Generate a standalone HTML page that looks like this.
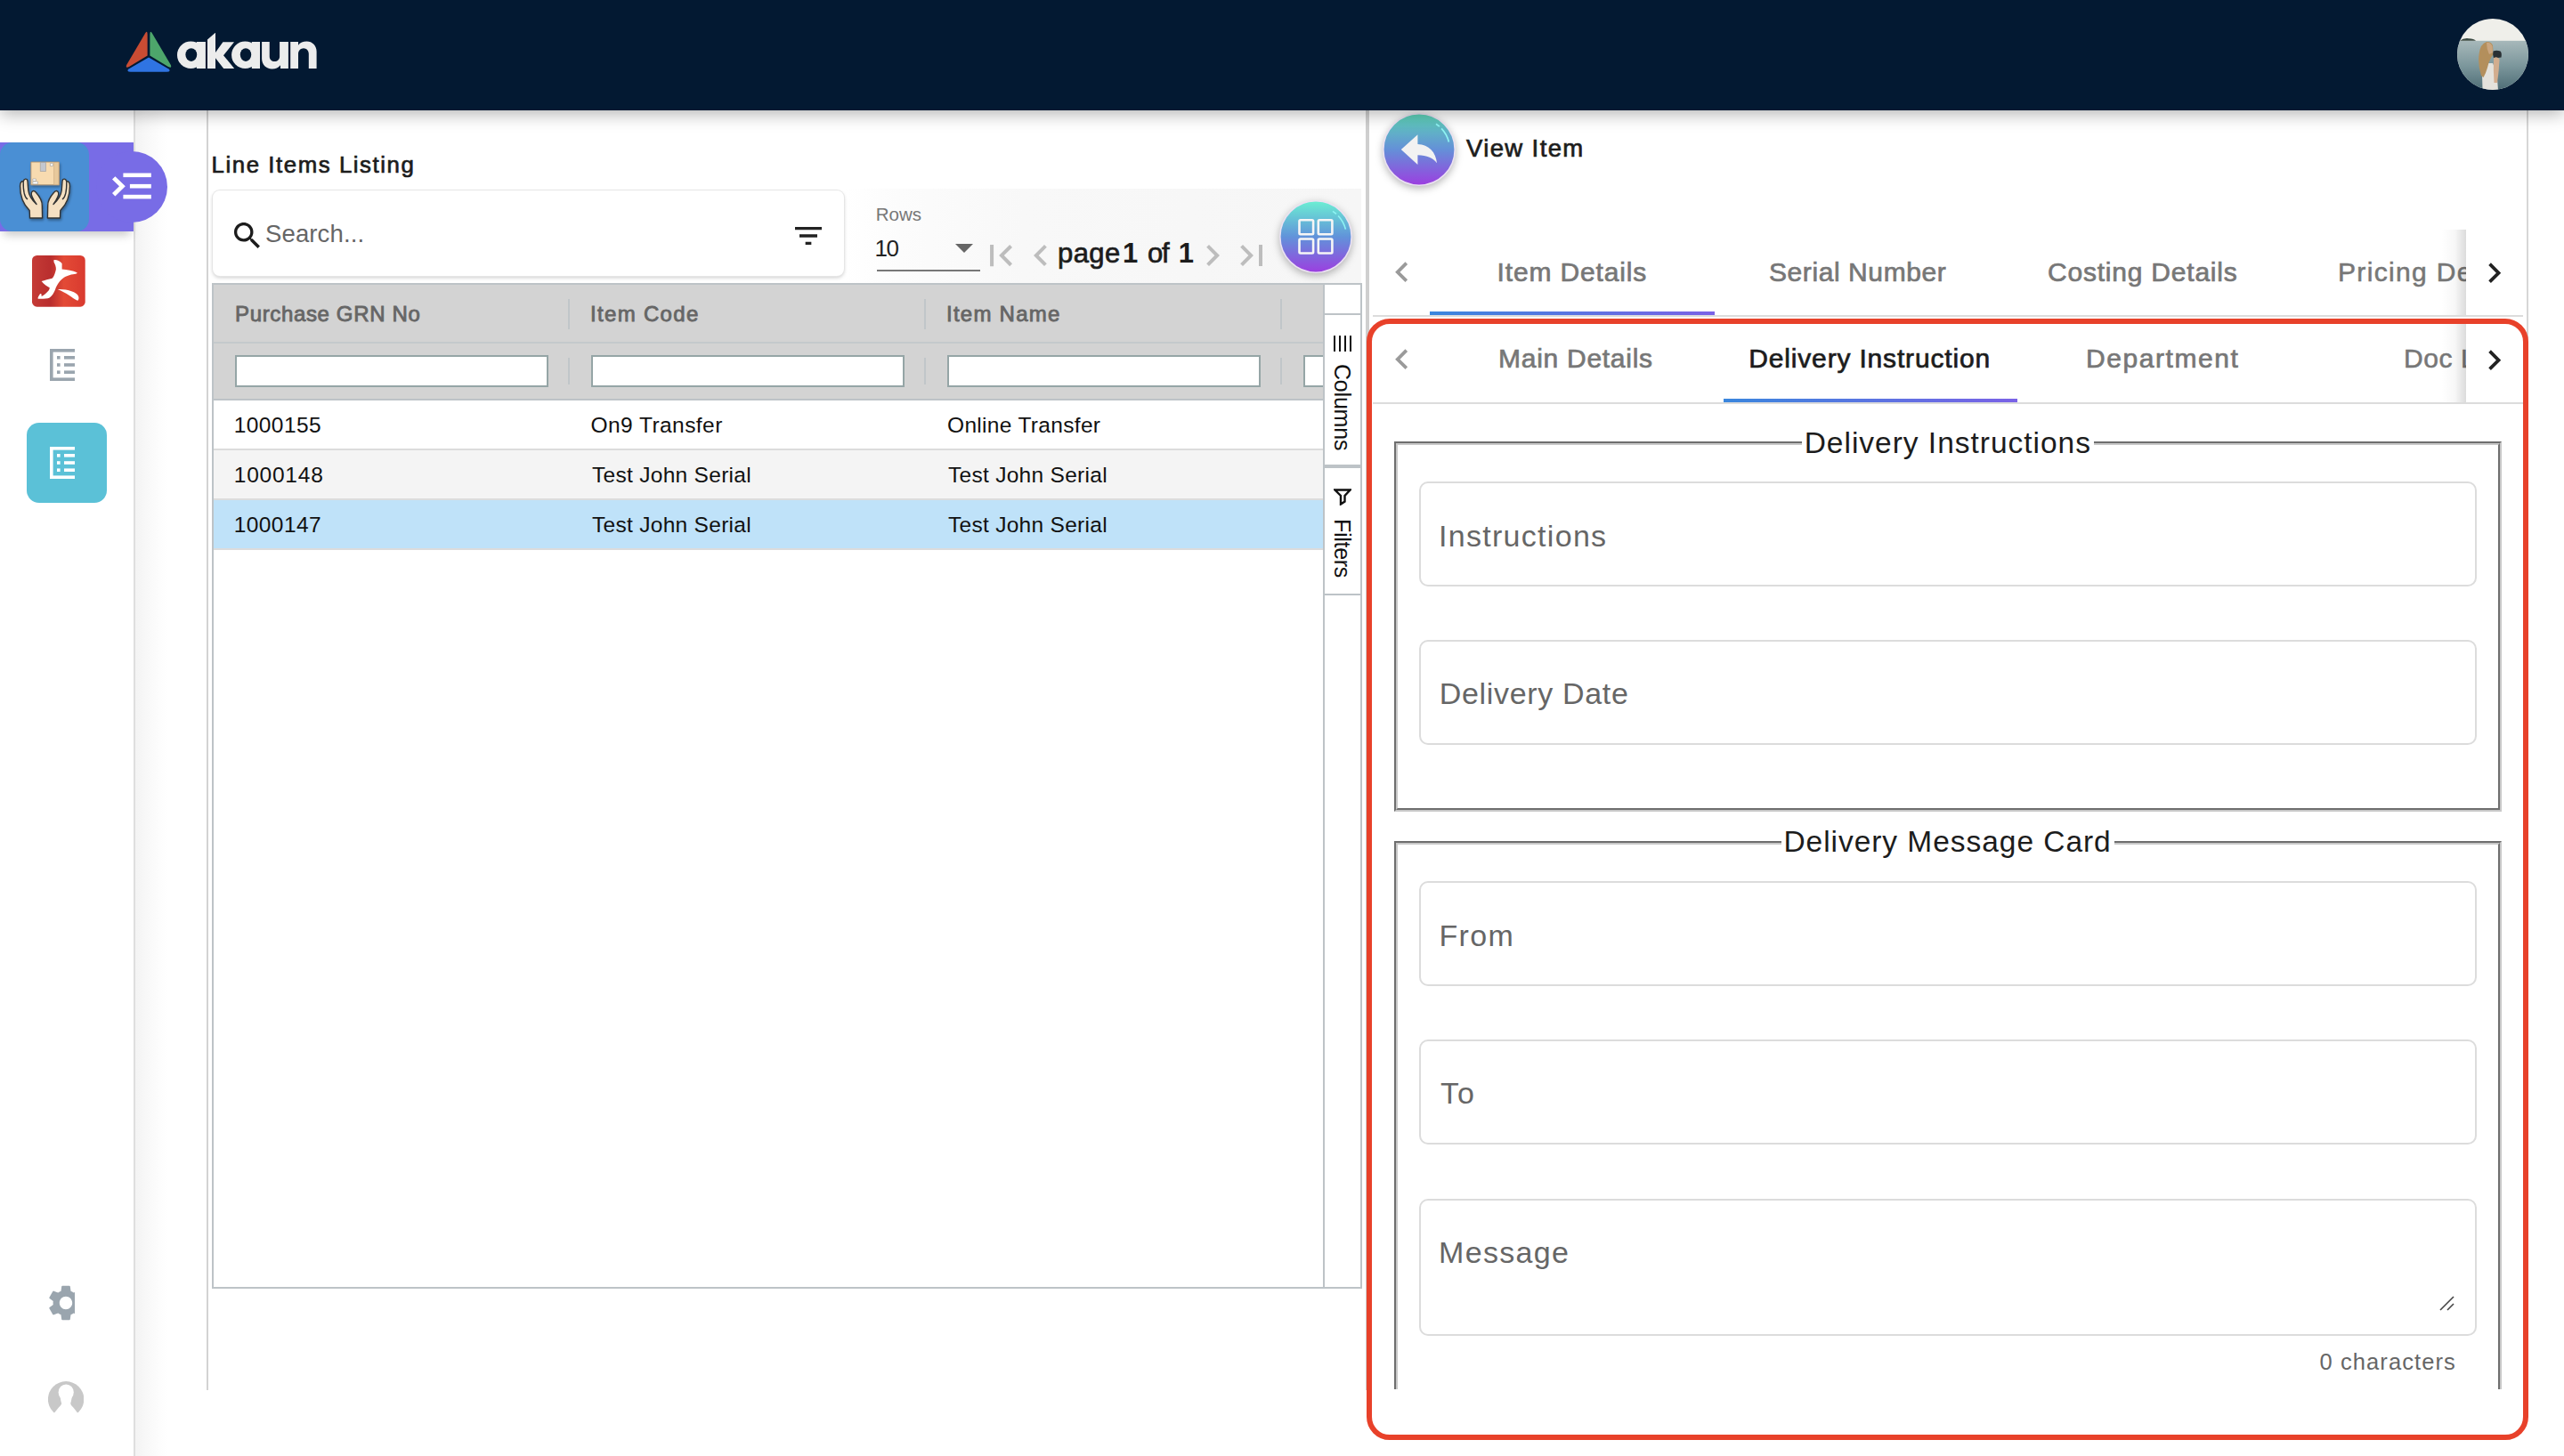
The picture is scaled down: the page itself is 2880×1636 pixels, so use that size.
<!DOCTYPE html>
<html><head><meta charset="utf-8"><style>
html,body{margin:0;padding:0;width:2880px;height:1636px;overflow:hidden;background:#fff;position:relative}
body{font-family:"Liberation Sans", sans-serif}
.t{position:absolute;white-space:nowrap;font-family:"Liberation Sans", sans-serif}
</style></head><body>
<div style="position:absolute;left:0px;top:0px;width:2880px;height:124px;background:#031932;z-index:5;box-shadow:0 4px 18px rgba(0,0,0,0.30)"></div>
<svg style="position:absolute;left:0px;top:0px;z-index:6" width="400" height="124" viewBox="0 0 400 124">
<path d="M163.2,37.2 Q165.6,33.8 165.6,38.5 V62.6 L145,75 Q140.5,77.2 142.3,72.8 Z" fill="#c94c33"/>
<path d="M168.4,38.5 Q168.4,33.8 170.8,37.2 L191.7,72.8 Q193.5,77.2 189,75 L168.4,62.6 Z" fill="#4da66b"/>
<path d="M167,64.6 L189.5,77.6 Q192.5,80.6 187.5,80.8 H146.5 Q141.5,80.6 144.5,77.6 Z" fill="#2f74e2"/>
<g fill="#ececec">
<circle cx="214.3" cy="61.8" r="15.3"/>
<rect x="220.9" y="47" width="10" height="30"/>
<path d="M233,44.4 L241.6,37 H242 V58.9 L250.4,47.2 H263 L251,62.2 L263.2,77 H251.2 L242,65.2 V77 H233 Z"/>
<circle cx="275.4" cy="61.8" r="15.3"/>
<rect x="282.8" y="47" width="9.2" height="30"/>
<path d="M323.9,47 V77 H315 V73.2 C313,76 309.5,77.5 305.5,77.5 C299,77.5 294.1,72.5 294.1,66 V47 H302.75 V63.5 C302.75,67 305.2,69 308.4,69 C311.6,69 314.1,67 314.1,63.5 V47 Z"/>
<path d="M326.2,77 V47 H335 V50.8 C337,48 340.5,46.6 344.5,46.6 C351,46.6 355.6,51.5 355.6,58 V77 H346.8 V60.5 C346.8,57 344.3,54.2 341,54.2 C337.7,54.2 335,57 335,60.5 V77 Z"/>
</g>
<ellipse cx="214.8" cy="61.6" rx="6.4" ry="7.4" fill="#031932"/>
<ellipse cx="276" cy="61.6" rx="6.2" ry="7.4" fill="#031932"/>
</svg>
<svg style="position:absolute;left:2760px;top:21px;z-index:6" width="80" height="80" viewBox="0 0 80 80">
<defs><clipPath id="avc"><circle cx="40" cy="40" r="40"/></clipPath>
<linearGradient id="sea" x1="0" y1="0" x2="0" y2="1"><stop offset="0" stop-color="#a7b8ba"/><stop offset="0.5" stop-color="#7c979c"/><stop offset="1" stop-color="#4d6c75"/></linearGradient></defs>
<g clip-path="url(#avc)">
<rect x="0" y="0" width="80" height="80" fill="#efefea"/>
<rect x="0" y="24.8" width="80" height="56" fill="url(#sea)"/>
<path d="M3,24.8 Q7,21.5 13,22.2 Q19,22.3 21,24.8 Z" fill="#3b4a42"/>
<path d="M28.5,80 L28,62 Q26,55 28.5,50 L40,50 Q45,60 46,80 Z" fill="#e4e2dc"/>
<path d="M27,64 Q23,52 24.5,40 Q26,28 33,26 Q38,25.5 40,30 L40.5,40 Q36,46 34,55 Q32,62 29.5,66 Z" fill="#b38f5c"/>
<path d="M33,27 Q37,26 39.5,31 L40,38 L36,40 Q33,34 33,27 Z" fill="#caa680"/>
<path d="M40.5,36.5 Q44,34.8 48.5,36.5 Q50.5,38.5 49.5,43.5 L41,44.5 Q39.5,40 40.5,36.5 Z" fill="#2a3034"/>
<path d="M41,44 Q46,42 47.5,46 Q47,58 45,72 L41.5,72 Q40.5,58 41,44 Z" fill="#d2ad8e"/>
</g></svg>
<div style="position:absolute;left:150px;top:124px;width:2px;height:1512px;background:#dedede"></div>
<div style="position:absolute;left:152px;top:124px;width:81px;height:1512px;background:linear-gradient(to right,#f3f3f3 0px,#f8f8f8 12px,#fdfdfd 28px,#fff 36px)"></div>
<div style="position:absolute;left:232px;top:124px;width:2px;height:1438px;background:#d3d3d3"></div>
<div style="position:absolute;left:0px;top:160px;width:150px;height:100px;background:#786ce6;box-shadow:0 8px 10px -4px rgba(0,0,0,0.22)"></div>
<div style="position:absolute;left:108px;top:170px;width:80px;height:80px;background:#786ce6;border-radius:50%"></div>
<div style="position:absolute;left:0px;top:160px;width:100px;height:100px;background:#4a8fd4;border-radius:14px"></div>
<svg style="position:absolute;left:0px;top:0px;" width="200" height="270" viewBox="0 0 200 270">
<defs><filter id="hs" x="-20%" y="-20%" width="140%" height="140%"><feGaussianBlur in="SourceAlpha" stdDeviation="1.6"/><feOffset dx="1.2" dy="2" result="ob"/><feComponentTransfer><feFuncA type="linear" slope="0.35"/></feComponentTransfer><feMerge><feMergeNode/><feMergeNode in="SourceGraphic"/></feMerge></filter></defs>
<g filter="url(#hs)">
<g stroke="#333" stroke-width="1.4" stroke-linejoin="round">
<rect x="34.8" y="182" width="31.6" height="25.8" fill="#f8dbb0" stroke="#a88c6c" stroke-width="0.9"/>
<rect x="60.6" y="182.5" width="5.4" height="25" fill="#e8c99c" stroke="#c9a87f" stroke-width="0.6"/>
<rect x="45.3" y="182.5" width="6.2" height="10" fill="#c3c7cf" stroke="#9a9a9a" stroke-width="0.6"/>
<rect x="56.4" y="183.6" width="3" height="3" fill="#fff" stroke="#9a9a9a" stroke-width="0.6"/>
<rect x="36.8" y="201" width="3.6" height="2.4" fill="#fff" stroke="#9a9a9a" stroke-width="0.6"/>
<rect x="36.8" y="204" width="5.6" height="2.8" fill="#fff" stroke="#9a9a9a" stroke-width="0.6"/>
<path d="M33.5,245 L33.2,236.5 C26.5,230 22.5,221 22.6,209 C22.7,204.5 24.5,203 26.2,204.2 C26.8,200.6 30.5,199.8 31,203.6 L31.8,214 C32.5,220 36,225 41,229.5 C37.5,224.5 34.6,219.5 35.3,216.6 C36.2,213.8 38.5,214 40.2,216 C43.8,220 47.5,225 47.3,231 L47.6,245 Z" fill="#f5e0c2"/>
<path d="M67.5,245 L67.8,236.5 C74.5,230 78.5,221 78.4,209 C78.3,204.5 76.5,203 74.8,204.2 C74.2,200.6 70.5,199.8 70,203.6 L69.2,214 C68.5,220 65,225 60,229.5 C63.5,224.5 66.4,219.5 65.7,216.6 C64.8,213.8 62.5,214 60.8,216 C57.2,220 53.5,225 53.7,231 L53.4,245 Z" fill="#f5e0c2"/>
<path d="M26.2,204.2 C26,215 28,222 31,224" fill="none"/>
<path d="M74.8,204.2 C75,215 73,222 70,224" fill="none"/>
</g></g>
<g fill="#fff">
<path d="M126,201.6 L129.4,198.2 L140.8,209.2 L129.4,220.4 L126,217 L134,209.2 Z"/>
<rect x="138.4" y="194.5" width="31.4" height="4.6"/>
<rect x="145.9" y="206.9" width="23.9" height="4.6"/>
<rect x="138.4" y="218.8" width="31.4" height="4.6"/>
</g></svg>
<svg style="position:absolute;left:36.25px;top:287px;" width="60" height="58" viewBox="0 0 60 58">
<defs><linearGradient id="rg" x1="0" x2="1"><stop offset="0" stop-color="#c53b36"/><stop offset="0.35" stop-color="#b92e2e"/><stop offset="0.6" stop-color="#e34a36"/><stop offset="1" stop-color="#d93a2f"/></linearGradient></defs>
<rect x="0" y="0" width="59.7" height="57.7" rx="5.5" fill="url(#rg)"/>
<path d="M24.5,5 C27,4.5 31,5.5 33.6,8.9 L33.6,15.6 C39,16.2 46,17 50.5,19.2 C51,20 50,20.8 44,21.4 C38,23 33,26 30.8,29.6 C28.5,32.5 27,35.5 25.9,38.7 C24.5,42 22.5,45.5 19.7,47.4 C17,48.6 12,49 7.2,48.8 C6,48.5 6.5,47 9.1,43 L10.6,43.5 L10.6,45.9 C13,45 16,42.5 18.8,39.2 C19.6,38 19.8,37 19.7,36.3 C17,35 13.5,32.5 10.6,29.1 C14,27.6 19,27 22.6,25.7 C24.5,24.5 26,20 26.9,15.6 C27,13 26,10 24.5,7.5 Z" fill="#fff"/>
<path d="M28.8,38 C33,37.6 40,38.5 44.2,40.2 C48,41.5 51.5,43 52.4,46.9 C52.7,48.5 52,50.7 51,50.7 C48,49.5 44,46.5 41.8,45 C38,42.5 33,39.5 28.8,38 Z" fill="#fff"/></svg>
<svg style="position:absolute;left:56px;top:392px;" width="28" height="36" viewBox="0 0 28 36"><g fill="#9aa5ae">
<rect x="0" y="0" width="28" height="3.6"/><rect x="0" y="32.4" width="28" height="3.6"/><rect x="0" y="0" width="3.6" height="36"/>
<rect x="8" y="8" width="3.6" height="3.6"/><rect x="16" y="8" width="12" height="3.6"/>
<rect x="8" y="16.2" width="3.6" height="3.6"/><rect x="16" y="16.2" width="12" height="3.6"/>
<rect x="8" y="24.4" width="3.6" height="3.6"/><rect x="16" y="24.4" width="12" height="3.6"/></g></svg>
<div style="position:absolute;left:30px;top:475px;width:90px;height:90px;background:#5bc1d7;border-radius:14px"></div>
<svg style="position:absolute;left:56px;top:502px;" width="28" height="36" viewBox="0 0 28 36"><g fill="#fff">
<rect x="0" y="0" width="28" height="3.6"/><rect x="0" y="32.4" width="28" height="3.6"/><rect x="0" y="0" width="3.6" height="36"/>
<rect x="8" y="8" width="3.6" height="3.6"/><rect x="16" y="8" width="12" height="3.6"/>
<rect x="8" y="16.2" width="3.6" height="3.6"/><rect x="16" y="16.2" width="12" height="3.6"/>
<rect x="8" y="24.4" width="3.6" height="3.6"/><rect x="16" y="24.4" width="12" height="3.6"/></g></svg>
<div style="position:absolute;left:50px;top:1440px;width:34px;height:48px;overflow:hidden"><svg style="position:absolute;left:0px;top:0px" width="48" height="48" viewBox="0 0 24 24"><path d="M19.14 12.94c.04-.3.06-.61.06-.94 0-.32-.02-.64-.07-.94l2.03-1.58c.18-.14.23-.41.12-.61l-1.92-3.32c-.12-.22-.37-.29-.59-.22l-2.39.96c-.5-.38-1.03-.7-1.62-.94l-.36-2.54c-.04-.24-.24-.41-.48-.41h-3.84c-.24 0-.43.17-.47.41l-.36 2.54c-.59.24-1.13.57-1.62.94l-2.39-.96c-.22-.08-.47 0-.59.22L2.74 8.87c-.12.21-.08.47.12.61l2.03 1.58c-.05.3-.09.63-.09.94s.02.64.07.94l-2.03 1.58c-.18.14-.23.41-.12.61l1.92 3.32c.12.22.37.29.59.22l2.39-.96c.5.38 1.03.7 1.62.94l.36 2.54c.05.24.24.41.48.41h3.84c.24 0 .44-.17.47-.41l.36-2.54c.59-.24 1.13-.56 1.62-.94l2.39.96c.22.08.47 0 .59-.22l1.92-3.32c.12-.22.07-.47-.12-.61l-2.01-1.58zM12 15.6c-1.98 0-3.6-1.62-3.6-3.6s1.62-3.6 3.6-3.6 3.6 1.62 3.6 3.6-1.62 3.6-3.6 3.6z" fill="#9aa5ae"/></svg></div>
<svg style="position:absolute;left:54px;top:1552px;" width="40" height="40" viewBox="0 0 40 40"><defs><clipPath id="uc"><rect x="0" y="0" width="40" height="35.4"/></clipPath></defs>
<g clip-path="url(#uc)"><circle cx="20.1" cy="20.3" r="20.2" fill="#c8c8c8"/></g>
<ellipse cx="20.2" cy="12.6" rx="8.6" ry="9.2" fill="#fff"/>
<path d="M13.6,17 C14,21 14.8,23.5 15.2,25 C14.5,27 13,28.5 11.5,30 L5,38 H35 L28.8,30 C27.3,28.5 25.8,27 25.2,25 C25.6,23.5 26.4,21 26.8,17 Z" fill="#fff"/></svg>
<div class="t" style="left:237.6px;top:172.67px;font-size:25.8px;line-height:25.8px;color:#1c1c1c;font-weight:400;letter-spacing:1.559px;;-webkit-text-stroke:0.7px #1c1c1c">Line Items Listing</div>
<div style="position:absolute;left:949px;top:212px;width:580px;height:106px;background:linear-gradient(to right,#fff 0px,#fcfcfc 60px,#f8f8f8 200px,#f6f6f6 100%)"></div>
<div style="position:absolute;left:239px;top:214px;width:709px;height:96px;background:#fff;border-radius:8px;box-shadow:0 0 0 1px #e6e6e6,0 2px 4px rgba(0,0,0,0.2)"></div>
<svg style="position:absolute;left:258px;top:245px;" width="39.77" height="39.77" viewBox="0 0 24 24"><path d="M15.5 14h-.79l-.28-.27C15.41 12.59 16 11.11 16 9.5 16 5.91 13.09 3 9.5 3S3 5.91 3 9.5 5.91 16 9.5 16c1.61 0 3.09-.59 4.23-1.57l.27.28v.79l5 4.99L20.49 19l-4.99-5zm-6 0C7.01 14 5 11.99 5 9.5S7.01 5 9.5 5 14 7.01 14 9.5 11.99 14 9.5 14z" fill="#1c1c1c"/></svg>
<div class="t" style="left:298.0px;top:249.02px;font-size:27.5px;line-height:27.5px;color:#666;font-weight:400;letter-spacing:0.125px;">Search...</div>
<svg style="position:absolute;left:888px;top:245px;" width="40.01" height="40.01" viewBox="0 0 24 24"><path d="M10 18h4v-2h-4v2zM3 6v2h18V6H3zm3 7h12v-2H6v2z" fill="#222"/></svg>
<div class="t" style="left:983.7px;top:231.38px;font-size:20.5px;line-height:20.5px;color:#777;font-weight:400;letter-spacing:-0.003px;">Rows</div>
<div class="t" style="left:982.5px;top:265.90px;font-size:26px;line-height:26px;color:#222;font-weight:400;letter-spacing:-1.5px;">10</div>
<div style="position:absolute;left:985px;top:303px;width:116px;height:2px;background:#777"></div>
<svg style="position:absolute;left:1073px;top:274px;" width="20" height="10" viewBox="0 0 20 10"><path d="M0,0 H20 L10,10 Z" fill="#666"/></svg>
<svg style="position:absolute;left:1100px;top:263px;" width="48.24" height="48.24" viewBox="0 0 24 24"><path d="M18.41 16.59L13.82 12l4.59-4.59L17 6l-6 6 6 6zM6 6h2v12H6z" fill="#bdbdbd"/></svg>
<svg style="position:absolute;left:1144.5px;top:263px;" width="48.0" height="48.0" viewBox="0 0 24 24"><path d="M15.41 7.41L14 6l-6 6 6 6 1.41-1.41L10.83 12z" fill="#bdbdbd"/></svg>
<div class="t" style="left:1188.0px;top:269.15px;font-size:31px;line-height:31px;color:#1c1c1c;font-weight:400;letter-spacing:0.4px;;-webkit-text-stroke:0.7px #1c1c1c">page</div>
<div class="t" style="left:1261.0px;top:269.15px;font-size:31px;line-height:31px;color:#1c1c1c;font-weight:700;letter-spacing:0.0px;">1</div>
<div class="t" style="left:1289.0px;top:269.15px;font-size:31px;line-height:31px;color:#1c1c1c;font-weight:400;letter-spacing:-1.3px;;-webkit-text-stroke:0.7px #1c1c1c">of</div>
<div class="t" style="left:1323.75px;top:269.15px;font-size:31px;line-height:31px;color:#1c1c1c;font-weight:700;letter-spacing:0.0px;">1</div>
<svg style="position:absolute;left:1337.8px;top:263px;" width="48.0" height="48.0" viewBox="0 0 24 24"><path d="M10 6L8.59 7.41 13.17 12l-4.58 4.59L10 18l6-6z" fill="#bdbdbd"/></svg>
<svg style="position:absolute;left:1381.8px;top:263px;" width="48.0" height="48.0" viewBox="0 0 24 24"><path d="M5.59 7.41L10.18 12l-4.59 4.59L7 18l6-6-6-6zM16 6h2v12h-2z" fill="#bdbdbd"/></svg>
<svg style="position:absolute;left:1437px;top:224px;filter:drop-shadow(0 3px 4px rgba(0,0,0,0.28))" width="82" height="86" viewBox="0 0 82 86"><defs><linearGradient id="gg" x1="0" y1="0" x2="0" y2="1"><stop offset="0" stop-color="#6cefd3"/><stop offset="0.5" stop-color="#6193da"/><stop offset="1" stop-color="#9c3ee0"/></linearGradient></defs>
<circle cx="41" cy="42" r="40.2" fill="url(#gg)" stroke="#ebe2f2" stroke-width="1.6"/>
<path d="M 60 13.4 A 34 34 0 0 1 74.4 33.6" fill="none" stroke="#8ff3f3" stroke-width="1.7" stroke-dasharray="5 3 40"/>
<g fill="none" stroke="#f6f6f6" stroke-width="2.6"><rect x="22.5" y="23.3" width="15.6" height="15.9" rx="1.2"/><rect x="43.8" y="23.3" width="15.6" height="15.9" rx="1.2"/><rect x="22.5" y="44.5" width="15.6" height="16" rx="1.2"/><rect x="43.8" y="44.5" width="15.6" height="16" rx="1.2"/></g></svg>
<div style="position:absolute;left:238px;top:318px;width:1292px;height:1130px;box-sizing:border-box;border:2px solid #bdc3c7;background:#fff"></div>
<div style="position:absolute;left:240px;top:320px;width:1247px;height:129px;background:#d3d3d3"></div>
<div style="position:absolute;left:240px;top:384px;width:1247px;height:2px;background:#c4c9cc"></div>
<div style="position:absolute;left:240px;top:448px;width:1247px;height:2px;background:#bdc3c7"></div>
<div style="position:absolute;left:240px;top:450px;width:1247px;height:54px;background:#fff"></div>
<div style="position:absolute;left:240px;top:504px;width:1247px;height:2px;background:#dcdcdc"></div>
<div class="t" style="left:262.8px;top:466.18px;font-size:24.5px;line-height:24.5px;color:#111;font-weight:400;letter-spacing:0.397px;">1000155</div>
<div class="t" style="left:663.5px;top:466.18px;font-size:24.5px;line-height:24.5px;color:#111;font-weight:400;letter-spacing:0.44px;">On9 Transfer</div>
<div class="t" style="left:1064.0px;top:466.18px;font-size:24.5px;line-height:24.5px;color:#111;font-weight:400;letter-spacing:0.324px;">Online Transfer</div>
<div style="position:absolute;left:240px;top:506px;width:1247px;height:54px;background:#f4f4f4"></div>
<div style="position:absolute;left:240px;top:560px;width:1247px;height:2px;background:#dcdcdc"></div>
<div class="t" style="left:262.8px;top:522.17px;font-size:24.5px;line-height:24.5px;color:#111;font-weight:400;letter-spacing:0.767px;">1000148</div>
<div class="t" style="left:665.0px;top:522.17px;font-size:24.5px;line-height:24.5px;color:#111;font-weight:400;letter-spacing:0.293px;">Test John Serial</div>
<div class="t" style="left:1065.0px;top:522.17px;font-size:24.5px;line-height:24.5px;color:#111;font-weight:400;letter-spacing:0.287px;">Test John Serial</div>
<div style="position:absolute;left:240px;top:562px;width:1247px;height:54px;background:#bfe2f9"></div>
<div style="position:absolute;left:240px;top:616px;width:1247px;height:2px;background:#dcdcdc"></div>
<div class="t" style="left:262.8px;top:578.17px;font-size:24.5px;line-height:24.5px;color:#111;font-weight:400;letter-spacing:0.4px;">1000147</div>
<div class="t" style="left:665.0px;top:578.17px;font-size:24.5px;line-height:24.5px;color:#111;font-weight:400;letter-spacing:0.293px;">Test John Serial</div>
<div class="t" style="left:1065.0px;top:578.17px;font-size:24.5px;line-height:24.5px;color:#111;font-weight:400;letter-spacing:0.287px;">Test John Serial</div>
<div class="t" style="left:264.0px;top:340.60px;font-size:24px;line-height:24px;color:#666;font-weight:400;letter-spacing:0.644px;;-webkit-text-stroke:0.85px #666">Purchase GRN No</div>
<div class="t" style="left:663.0px;top:340.60px;font-size:24px;line-height:24px;color:#666;font-weight:400;letter-spacing:1.32px;;-webkit-text-stroke:0.85px #666">Item Code</div>
<div class="t" style="left:1063.0px;top:340.60px;font-size:24px;line-height:24px;color:#666;font-weight:400;letter-spacing:1.25px;;-webkit-text-stroke:0.85px #666">Item Name</div>
<div style="position:absolute;left:638px;top:336px;width:2px;height:34px;background:#c0c6c9"></div>
<div style="position:absolute;left:638px;top:402px;width:2px;height:30px;background:#c0c6c9"></div>
<div style="position:absolute;left:1038px;top:336px;width:2px;height:34px;background:#c0c6c9"></div>
<div style="position:absolute;left:1038px;top:402px;width:2px;height:30px;background:#c0c6c9"></div>
<div style="position:absolute;left:1438px;top:336px;width:2px;height:34px;background:#c0c6c9"></div>
<div style="position:absolute;left:1438px;top:402px;width:2px;height:30px;background:#c0c6c9"></div>
<div style="position:absolute;left:264px;top:399px;width:352px;height:36px;box-sizing:border-box;border:2px solid #95a5a6;background:#fff"></div>
<div style="position:absolute;left:664px;top:399px;width:352px;height:36px;box-sizing:border-box;border:2px solid #95a5a6;background:#fff"></div>
<div style="position:absolute;left:1064px;top:399px;width:352px;height:36px;box-sizing:border-box;border:2px solid #95a5a6;background:#fff"></div>
<div style="position:absolute;left:1464px;top:399px;width:23px;height:36px;box-sizing:border-box;border:2px solid #95a5a6;border-right:none;background:#fff"></div>
<div style="position:absolute;left:1487px;top:320px;width:41px;height:1126px;background:#fff"></div>
<div style="position:absolute;left:1486px;top:320px;width:2px;height:1126px;background:#bdc3c7"></div>
<div style="position:absolute;left:1488px;top:352px;width:40px;height:2px;background:#bdc3c7"></div>
<div style="position:absolute;left:1488px;top:522px;width:40px;height:4px;background:#bdc3c7"></div>
<div style="position:absolute;left:1488px;top:667px;width:40px;height:2px;background:#bdc3c7"></div>
<svg style="position:absolute;left:1498px;top:377px;" width="20" height="18" viewBox="0 0 20 18"><g fill="#111"><rect x="0" y="0" width="2" height="18" rx="0.5"/><rect x="6" y="0" width="2" height="18" rx="0.5"/><rect x="12" y="0" width="2" height="18" rx="0.5"/><rect x="18" y="0" width="2" height="18" rx="0.5"/></g></svg>
<div class="t" style="left:1495px;top:409px;font-size:25px;line-height:25px;color:#111;writing-mode:vertical-rl;letter-spacing:-0.2px">Columns</div>
<svg style="position:absolute;left:1498px;top:549px;" width="20" height="19" viewBox="0 0 20 19"><path d="M1.5,1.5 H18.5 L12.5,8 V14.5 L8,17.5 V8 Z" fill="none" stroke="#111" stroke-width="2.4" stroke-linejoin="miter"/></svg>
<div class="t" style="left:1495px;top:583px;font-size:25px;line-height:25px;color:#111;writing-mode:vertical-rl;letter-spacing:-0.3px">Filters</div>
<div style="position:absolute;left:1534px;top:124px;width:4px;height:1438px;background:#cfcfcf"></div>
<div style="position:absolute;left:2838px;top:124px;width:2px;height:1438px;background:#d6d6d6"></div>
<svg style="position:absolute;left:1553px;top:127px;filter:drop-shadow(0 3px 4px rgba(0,0,0,0.28))" width="82" height="82" viewBox="0 0 82 82"><defs><linearGradient id="bg2" x1="0" y1="0" x2="0" y2="1"><stop offset="0" stop-color="#5dd3b5"/><stop offset="0.5" stop-color="#6490d8"/><stop offset="1" stop-color="#9c3ee0"/></linearGradient></defs>
<circle cx="41" cy="41" r="40.2" fill="url(#bg2)" stroke="#ebe2f2" stroke-width="1.6"/>
<path d="M 60 12.2 A 34 34 0 0 1 74.4 32.5" fill="none" stroke="#8ff3f3" stroke-width="1.7" stroke-dasharray="5 3 40"/>
<path d="M39.4,34.9 V24.2 L20.8,41 L39.4,57.9 V47.3 C50,47.3 57,51 61,56.2 C60,44 52,35.5 39.4,34.9 Z" fill="#f2f2f2"/></svg>
<div class="t" style="left:1647.0px;top:152.62px;font-size:27.5px;line-height:27.5px;color:#1c1c1c;font-weight:400;letter-spacing:1.375px;;-webkit-text-stroke:0.7px #1c1c1c">View Item</div>
<svg style="position:absolute;left:1551.9px;top:283.2px;" width="45.36" height="45.36" viewBox="0 0 24 24"><path d="M15.41 7.41L14 6l-6 6 6 6 1.41-1.41L10.83 12z" fill="#9a9a9a"/></svg>
<div class="t" style="left:1681.5px;top:290.50px;font-size:30px;line-height:30px;color:#777;font-weight:400;letter-spacing:0.863px;;-webkit-text-stroke:0.7px #777">Item Details</div>
<div class="t" style="left:1987.0px;top:290.50px;font-size:30px;line-height:30px;color:#777;font-weight:400;letter-spacing:0.583px;;-webkit-text-stroke:0.7px #777">Serial Number</div>
<div class="t" style="left:2300.0px;top:290.50px;font-size:30px;line-height:30px;color:#777;font-weight:400;letter-spacing:0.787px;;-webkit-text-stroke:0.7px #777">Costing Details</div>
<div style="position:absolute;left:2627px;top:250px;width:143px;height:100px;overflow:hidden"><div class="t" style="left:-1px;top:40.5px;font-size:30px;line-height:30px;color:#777;font-weight:400;-webkit-text-stroke:0.55px #777;letter-spacing:1.35px">Pricing Details</div></div>
<div style="position:absolute;left:2742px;top:258px;width:28px;height:96px;background:linear-gradient(to right,rgba(0,0,0,0) 0%,rgba(0,0,0,0.03) 55%,rgba(0,0,0,0.14) 100%)"></div>
<svg style="position:absolute;left:2779.3px;top:284px;" width="45.36" height="45.36" viewBox="0 0 24 24"><path d="M10 6L8.59 7.41 13.17 12l-4.58 4.59L10 18l6-6z" fill="#222"/></svg>
<div style="position:absolute;left:1606px;top:350px;width:320px;height:4px;background:linear-gradient(to right,#3a86dd,#7a62e6)"></div>
<div style="position:absolute;left:1542px;top:354px;width:1292px;height:2px;background:#dcdcdc"></div>
<svg style="position:absolute;left:1551.9px;top:381.2px;" width="45.36" height="45.36" viewBox="0 0 24 24"><path d="M15.41 7.41L14 6l-6 6 6 6 1.41-1.41L10.83 12z" fill="#9a9a9a"/></svg>
<div class="t" style="left:1683.0px;top:387.50px;font-size:30px;line-height:30px;color:#777;font-weight:400;letter-spacing:0.728px;;-webkit-text-stroke:0.7px #777">Main Details</div>
<div class="t" style="left:1964.3px;top:387.80px;font-size:30px;line-height:30px;color:#1c1c1c;font-weight:400;letter-spacing:0.829px;;-webkit-text-stroke:0.7px #1c1c1c">Delivery Instruction</div>
<div class="t" style="left:2343.0px;top:387.50px;font-size:30px;line-height:30px;color:#777;font-weight:400;letter-spacing:1.559px;;-webkit-text-stroke:0.7px #777">Department</div>
<div style="position:absolute;left:2700px;top:370px;width:70px;height:80px;overflow:hidden"><div class="t" style="left:0px;top:17.5px;font-size:30px;line-height:30px;color:#777;font-weight:400;-webkit-text-stroke:0.55px #777;letter-spacing:0.6px">Doc Link</div></div>
<div style="position:absolute;left:2742px;top:364px;width:28px;height:88px;background:linear-gradient(to right,rgba(0,0,0,0) 0%,rgba(0,0,0,0.03) 55%,rgba(0,0,0,0.14) 100%)"></div>
<svg style="position:absolute;left:2779.3px;top:381.5px;" width="45.36" height="45.36" viewBox="0 0 24 24"><path d="M10 6L8.59 7.41 13.17 12l-4.58 4.59L10 18l6-6z" fill="#222"/></svg>
<div style="position:absolute;left:1936px;top:448px;width:330px;height:4px;background:linear-gradient(to right,#3a86dd,#7a62e6)"></div>
<div style="position:absolute;left:1542px;top:452px;width:1292px;height:2px;background:#dcdcdc"></div>
<div style="position:absolute;left:1566px;top:496px;width:1244px;height:416px;box-sizing:border-box;border-style:solid;border-width:2px;border-color:#6e6e6e #c8c8c8 #c8c8c8 #6e6e6e"></div>
<div style="position:absolute;left:1568px;top:498px;width:1240px;height:412px;box-sizing:border-box;border-style:solid;border-width:2px;border-color:#c8c8c8 #6e6e6e #6e6e6e #c8c8c8"></div>
<div style="position:absolute;left:2024px;top:495px;width:328px;height:6px;background:#fff"></div>
<div class="t" style="left:2026.7px;top:480.52px;font-size:33.5px;line-height:33.5px;color:#1c1c1c;font-weight:400;letter-spacing:0.985px;">Delivery Instructions</div>
<div style="position:absolute;left:1566px;top:945px;width:1244px;height:655px;box-sizing:border-box;border-style:solid;border-width:2px;border-color:#6e6e6e #c8c8c8 #c8c8c8 #6e6e6e"></div>
<div style="position:absolute;left:1568px;top:947px;width:1240px;height:651px;box-sizing:border-box;border-style:solid;border-width:2px;border-color:#c8c8c8 #6e6e6e #6e6e6e #c8c8c8"></div>
<div style="position:absolute;left:2001px;top:944px;width:374px;height:6px;background:#fff"></div>
<div class="t" style="left:2003.4px;top:929.42px;font-size:33.5px;line-height:33.5px;color:#1c1c1c;font-weight:400;letter-spacing:0.96px;">Delivery Message Card</div>
<div style="position:absolute;left:1594px;top:541px;width:1188px;height:118px;box-sizing:border-box;border:2px solid #dcdcdc;border-radius:10px;background:#fff"></div>
<div class="t" style="left:1616.0px;top:584.70px;font-size:34px;line-height:34px;color:#666;font-weight:400;letter-spacing:1.294px;">Instructions</div>
<div style="position:absolute;left:1594px;top:719px;width:1188px;height:118px;box-sizing:border-box;border:2px solid #dcdcdc;border-radius:10px;background:#fff"></div>
<div class="t" style="left:1616.8px;top:761.90px;font-size:34px;line-height:34px;color:#666;font-weight:400;letter-spacing:0.668px;">Delivery Date</div>
<div style="position:absolute;left:1594px;top:990px;width:1188px;height:118px;box-sizing:border-box;border:2px solid #dcdcdc;border-radius:10px;background:#fff"></div>
<div class="t" style="left:1616.4px;top:1033.80px;font-size:34px;line-height:34px;color:#666;font-weight:400;letter-spacing:1.403px;">From</div>
<div style="position:absolute;left:1594px;top:1168px;width:1188px;height:118px;box-sizing:border-box;border:2px solid #dcdcdc;border-radius:10px;background:#fff"></div>
<div class="t" style="left:1618.0px;top:1211.10px;font-size:34px;line-height:34px;color:#666;font-weight:400;letter-spacing:2.0px;">To</div>
<div style="position:absolute;left:1594px;top:1347px;width:1188px;height:154px;box-sizing:border-box;border:2px solid #dcdcdc;border-radius:10px;background:#fff"></div>
<div class="t" style="left:1616.0px;top:1389.90px;font-size:34px;line-height:34px;color:#666;font-weight:400;letter-spacing:1.333px;">Message</div>
<svg style="position:absolute;left:2740px;top:1456px;" width="18" height="18" viewBox="0 0 18 18"><g stroke="#444" stroke-width="1.6"><line x1="1" y1="16" x2="16" y2="1"/><line x1="9" y1="16" x2="16" y2="9"/></g></svg>
<div class="t" style="left:2605.6px;top:1518.33px;font-size:25.5px;line-height:25.5px;color:#666;font-weight:400;letter-spacing:1.075px;">0 characters</div>
<div style="position:absolute;left:1538px;top:1561px;width:1342px;height:75px;background:#fff"></div>
<div style="position:absolute;left:1535px;top:358px;width:1305px;height:1260px;box-sizing:border-box;border:6px solid #e8412a;border-radius:26px;z-index:10"></div>
</body></html>
